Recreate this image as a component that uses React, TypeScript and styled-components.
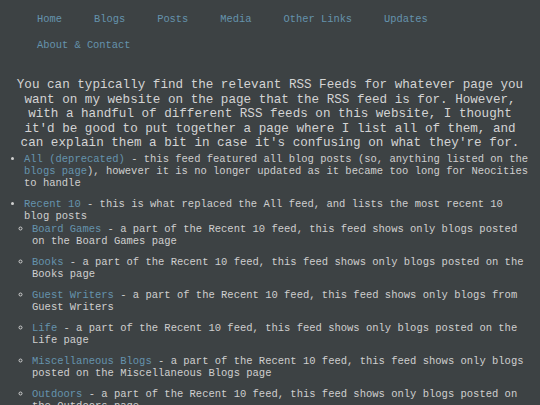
import React from 'react';
import styled, { createGlobalStyle } from 'styled-components';

const GlobalStyle = createGlobalStyle`
  html, body {
    margin: 0;
    padding: 0;
    background-color: #3d4244;
  }
  body {
    font-family: "Liberation Mono", "Courier New", monospace;
    color: #d2d2d2;
  }
`;

const navItems = ['Home', 'Blogs', 'Posts', 'Media', 'Other Links', 'Updates', 'About & Contact'];

type Feed = { name: string; text: string };

const recentFeeds: Feed[] = [
  { name: 'Board Games', text: ' - a part of the Recent 10 feed, this feed shows only blogs posted on the Board Games page' },
  { name: 'Books', text: ' - a part of the Recent 10 feed, this feed shows only blogs posted on the Books page' },
  { name: 'Guest Writers', text: ' - a part of the Recent 10 feed, this feed shows only blogs from Guest Writers' },
  { name: 'Life', text: ' - a part of the Recent 10 feed, this feed shows only blogs posted on the Life page' },
  { name: 'Miscellaneous Blogs', text: ' - a part of the Recent 10 feed, this feed shows only blogs posted on the Miscellaneous Blogs page' },
  { name: 'Outdoors', text: ' - a part of the Recent 10 feed, this feed shows only blogs posted on the Outdoors page' },
];

const App = () => {
  return (
    <>
      <GlobalStyle />
      <Nav>
        {navItems.map((item) => (
          <NavLink key={item} href="#">
            {item}
          </NavLink>
        ))}
      </Nav>
      <Intro>
        You can typically find the relevant RSS Feeds for whatever page you want on my website on the
        page that the RSS feed is for. However, with a handful of different RSS feeds on this website,
        I thought it'd be good to put together a page where I list all of them, and can explain them a
        bit in case it's confusing on what they're for.
      </Intro>
      <Content>
        <FeedList>
          <FeedItem>
            <FeedLink href="#">All (deprecated)</FeedLink> - this feed featured all blog posts (so,
            anything listed on the <FeedLink href="#">blogs page</FeedLink>), however it is no longer
            updated as it became too long for Neocities to handle
          </FeedItem>
          <FeedItem>
            <FeedLink href="#">Recent 10</FeedLink> - this is what replaced the All feed, and lists
            the most recent 10 blog posts
            <FeedList $nested>
              {recentFeeds.map((feed) => (
                <FeedItem key={feed.name}>
                  <FeedLink href="#">{feed.name}</FeedLink>
                  {feed.text}
                </FeedItem>
              ))}
            </FeedList>
          </FeedItem>
        </FeedList>
      </Content>
    </>
  );
};

const Nav = styled.nav`
  display: flex;
  flex-wrap: wrap;
  padding: 6px 0 0 21px;
`;
const NavLink = styled.a`
  display: block;
  padding: 7px 16px;
  font-size: 10.4px;
  line-height: 12px;
  color: #6593ad;
  text-decoration: none;
  white-space: nowrap;
`;
const Intro = styled.p`
  margin: 20px 0 0;
  padding: 0 14px;
  text-align: center;
  font-size: 12.6px;
  line-height: 14.5px;
  color: #d4d4d4;
`;
const Content = styled.div`
  padding: 2px 8px 0 16px;
`;
const FeedList = styled.ul<{ $nested?: boolean }>`
  margin: ${(p) => (p.$nested ? '1px 0 0' : '0')};
  padding-left: 8px;
  list-style-type: ${(p) => (p.$nested ? 'circle' : 'disc')};
  font-size: 10.5px;
  line-height: 12px;
  color: #cfcfcf;
`;
const FeedItem = styled.li`
  margin-bottom: 9px;
`;
const FeedLink = styled.a`
  color: #6593ad;
  text-decoration: none;
`;

export default App;
